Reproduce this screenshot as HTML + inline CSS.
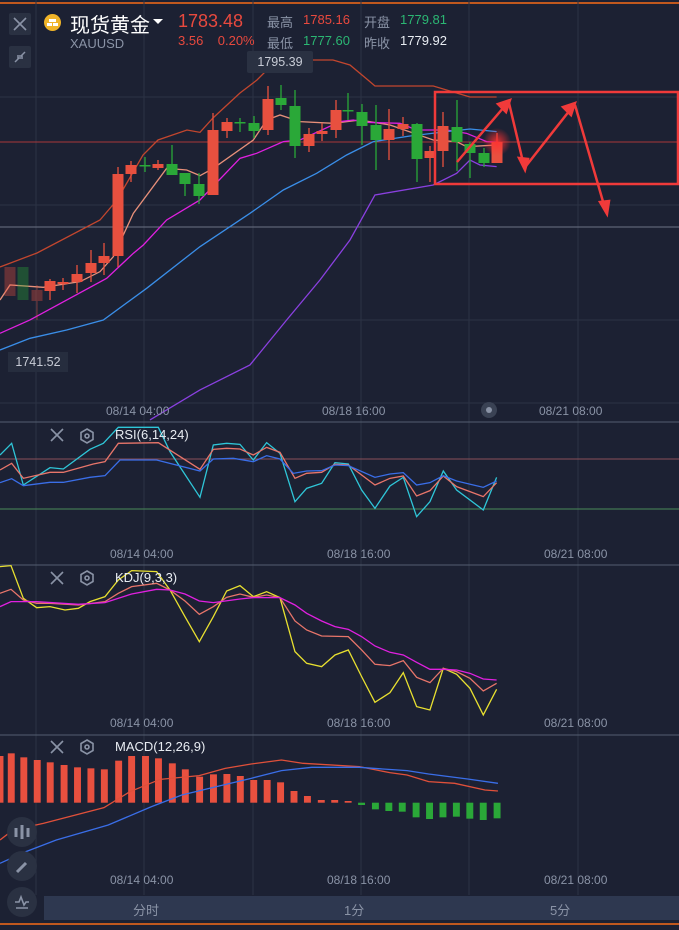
<!DOCTYPE html>
<html><head><meta charset="utf-8"><style>
body{margin:0;width:679px;height:930px;background:#1c2133;overflow:hidden;font-family:"Liberation Sans","Noto Sans CJK SC",sans-serif;position:relative}
.t{position:absolute;white-space:nowrap}
.g{color:#8a93a6}
.r{color:#e8493e}
.gr{color:#2bb673}
.w{color:#e8ecf2}
.ax{position:absolute;font-size:12px;color:#8a93a6}
svg{position:absolute;left:0;top:0}
.btn{position:absolute;width:22px;height:22px;background:#2a3142;border-radius:2px}
.cir{position:absolute;left:7px;width:30px;height:30px;border-radius:50%;background:#2a3142}
</style></head><body>
<svg width="679" height="930">
<defs><radialGradient id="gl"><stop offset="0" stop-color="#ff3030" stop-opacity=".9"/><stop offset="1" stop-color="#ff3030" stop-opacity="0"/></radialGradient></defs>
<line x1="0" y1="3" x2="679" y2="3" stroke="#c0581e" stroke-width="2"/>
<line x1="0" y1="924" x2="679" y2="924" stroke="#c0581e" stroke-width="2"/>
<g stroke="#2c3345" stroke-width="1">
<line x1="36" y1="0" x2="36" y2="895"/><line x1="144" y1="0" x2="144" y2="895"/><line x1="253" y1="0" x2="253" y2="895"/><line x1="361" y1="0" x2="361" y2="895"/><line x1="469" y1="0" x2="469" y2="895"/><line x1="578" y1="0" x2="578" y2="895"/>
<line x1="0" y1="97" x2="679" y2="97"/><line x1="0" y1="205" x2="679" y2="205"/><line x1="0" y1="320" x2="679" y2="320"/><line x1="0" y1="403" x2="679" y2="403"/>
</g>
<line x1="0" y1="227" x2="679" y2="227" stroke="#6b7385"/>
<line x1="0" y1="142" x2="679" y2="142" stroke="#a8383a"/>
<line x1="0" y1="422" x2="679" y2="422" stroke="#555d70"/>
<line x1="0" y1="565" x2="679" y2="565" stroke="#555d70"/>
<line x1="0" y1="735" x2="679" y2="735" stroke="#555d70"/>
<line x1="0" y1="459" x2="679" y2="459" stroke="#8a5058"/>
<line x1="0" y1="509" x2="679" y2="509" stroke="#4a8a58"/>

<g transform="translate(0,80) scale(0.3333)" fill="none" stroke-width="1.3">
<polyline vector-effect="non-scaling-stroke" stroke="#c2462e" points="0,561 111,519 300,420 351,360 429,225 474,180 561,150 600,157 639,114 720,39 771,0 831,-60 999,-60 1050,-45 1104,0 1125,18 1300,18 1410,51 1490,51"/>
<polyline vector-effect="non-scaling-stroke" stroke="#e8907a" points="0,660 30,615 130,622 240,605 300,575 340,530 400,400 500,265 560,270 600,287 640,265 760,180 800,120 840,105 900,125 1000,130 1080,120 1170,135 1300,180 1370,185 1400,200 1490,195"/>
<polyline vector-effect="non-scaling-stroke" stroke="#e020e0" points="0,760 90,720 320,595 400,520 430,495 500,420 600,360 720,235 770,220 850,185 900,180 1020,125 1060,120 1100,127 1200,130 1250,150 1340,150 1400,160 1460,185 1490,187"/>
<polyline vector-effect="non-scaling-stroke" stroke="#3a8ee8" points="0,810 90,775 200,750 310,720 440,625 600,500 750,400 850,330 950,280 1040,225 1120,185 1230,168 1340,155 1410,147 1490,155"/>
<polyline vector-effect="non-scaling-stroke" stroke="#8a40e0" points="450,1020 600,930 750,855 860,720 960,600 1050,480 1125,345 1300,315 1370,280 1410,240 1440,255 1490,260"/>
</g>

<g id="candles"></g>
<circle cx="497" cy="142" r="14" fill="url(#gl)"/>
<rect x="435" y="92" width="243" height="92" fill="none" stroke="#f03a3a" stroke-width="2.5"/>
<g stroke="#f03a3a" stroke-width="2.5" fill="#f03a3a">
<line x1="457" y1="162" x2="504" y2="107"/><polygon points="510,100 498,104 506,112"/>
<line x1="509" y1="103" x2="523" y2="162"/><polygon points="525,170 519,158 528,159"/>
<line x1="526" y1="166" x2="570" y2="110"/><polygon points="575,103 563,107 571,115"/>
<line x1="575" y1="105" x2="604" y2="205"/><polygon points="607,214 600,202 609,201"/>
</g>

<g transform="translate(0,420) scale(0.3333)" fill="none" stroke-width="1.3">
<polyline vector-effect="non-scaling-stroke" stroke="#2fc6d8" points="0,105 35,70 70,195 150,143 190,147 270,88 310,70 355,22 475,22 510,95 600,232 640,75 680,70 720,73 760,120 800,68 840,100 885,245 920,205 965,190 1005,128 1045,132 1085,210 1125,265 1170,198 1210,172 1250,290 1290,245 1330,153 1370,210 1450,270 1490,172"/>
<polyline vector-effect="non-scaling-stroke" stroke="#e8756a" points="0,150 35,130 70,175 150,157 190,157 280,132 315,125 355,70 475,68 600,148 640,88 680,85 720,87 760,105 800,82 840,97 885,175 920,160 965,157 1005,133 1045,135 1125,195 1170,175 1210,168 1250,228 1290,212 1330,168 1370,200 1450,230 1490,188"/>
<polyline vector-effect="non-scaling-stroke" stroke="#3a6ee8" points="0,188 35,176 70,197 150,187 190,187 270,172 315,167 360,120 470,120 600,153 640,117 700,115 760,125 800,107 840,117 880,160 920,153 965,152 1005,135 1045,137 1125,172 1170,162 1210,158 1250,195 1290,188 1330,167 1370,183 1450,202 1490,183"/>
<polyline vector-effect="non-scaling-stroke" stroke="#e8e030" points="0,440 33,437 70,535 110,563 150,560 195,570 235,565 270,545 315,530 355,480 395,452 470,455 510,510 555,590 598,665 640,590 680,513 720,497 760,530 800,515 840,533 885,695 920,730 965,740 1005,705 1045,690 1085,770 1125,847 1170,818 1210,758 1250,860 1290,870 1330,745 1370,763 1410,805 1450,885 1490,808"/>
<polyline vector-effect="non-scaling-stroke" stroke="#e8756a" points="0,520 33,508 70,540 110,550 150,550 235,555 315,545 355,520 395,500 470,490 510,510 555,543 598,583 640,560 680,532 720,522 760,532 800,525 840,533 885,603 920,630 965,648 1045,650 1085,690 1125,733 1170,737 1210,722 1250,772 1290,788 1330,745 1370,755 1410,775 1450,813 1490,790"/>
<polyline vector-effect="non-scaling-stroke" stroke="#e020e0" points="0,560 33,545 110,545 235,553 315,548 395,522 470,508 510,510 555,522 598,543 640,548 720,537 760,533 840,533 885,555 920,580 965,603 1005,620 1045,628 1085,650 1125,678 1170,697 1210,705 1250,727 1290,748 1330,748 1370,750 1410,760 1450,777 1490,780"/>
</g>

<g id="macd"></g>
<g transform="translate(0,730) scale(0.433,0.3333)" fill="none" stroke-width="1.3">
<polyline vector-effect="non-scaling-stroke" stroke="#e0503a" points="0,330 30,300 100,280 240,233 300,185 370,148 460,137 520,115 580,102 650,90 700,100 830,110 900,128 940,135 990,155 1050,160 1120,180 1150,183"/>
<polyline vector-effect="non-scaling-stroke" stroke="#3a6ee8" points="0,400 60,365 130,330 250,285 350,230 420,195 500,170 580,145 650,122 720,112 830,112 940,122 990,132 1080,147 1150,160"/>
</g>

<g stroke="#8a93a6" stroke-width="1.6" fill="none">
<path d="M51 429l12 12M63 429l-12 12"/><path d="M51 572l12 12M63 572l-12 12"/><path d="M51 741l12 12M63 741l-12 12"/>
<polygon points="87,429 93,432.5 93,439.5 87,443 81,439.5 81,432.5"/><circle cx="87" cy="436" r="2"/>
<polygon points="87,571 93,574.5 93,581.5 87,585 81,581.5 81,574.5"/><circle cx="87" cy="578" r="2"/>
<polygon points="87,740 93,743.5 93,750.5 87,754 81,750.5 81,743.5"/><circle cx="87" cy="747" r="2"/>
</g>
<rect x="44" y="896" width="635" height="24" fill="#2e3850"/>
</svg>
<script>
var C=[[10,267,296,0,1,267,296],[23,267,300,1,1,267,300],[37,290,301,0,1,285,320],[50,281,291,0,0,279,300],[63,282,284,0,0,278,290],[77,274,282,0,0,265,293],[91,263,273,0,0,250,282],[104,256,263,0,0,243,275],[118,174,256,0,0,167,267],[131,165,174,0,0,161,182],[145,165,166,1,0,157,172],[158,164,168,0,0,160,170],[172,164,175,1,0,145,175],[185,173,184,1,0,173,196],[199,184,196,1,0,173,204],[213,130,195,0,0,113,195],[227,122,131,0,0,118,138],[240,122,123,1,0,118,132],[254,123,131,1,0,116,138],[268,99,130,0,0,86,135],[281,98,105,1,0,85,110],[295,106,146,1,0,90,158],[309,134,146,0,0,128,152],[322,131,134,0,0,123,141],[336,110,130,0,0,100,138],[348,110,111,1,0,93,120],[362,112,126,1,0,104,145],[376,125,140,1,0,105,170],[389,129,140,0,0,109,160],[403,124,129,0,0,117,136],[417,124,159,1,0,123,182],[430,151,158,0,0,146,182],[443,126,151,0,0,112,167],[457,127,142,1,0,100,171],[470,144,153,1,0,142,178],[484,153,163,1,0,148,167],[497,142,163,0,0,133,163]];
var s='';C.forEach(function(c){var col=c[3]?'#2aa838':'#e8503f';var op=c[4]?0.35:1;s+='<g opacity="'+op+'"><line x1="'+c[0]+'" y1="'+c[5]+'" x2="'+c[0]+'" y2="'+c[6]+'" stroke="'+col+'" stroke-width="1.3"/><rect x="'+(c[0]-5.5)+'" y="'+c[1]+'" width="11" height="'+Math.max(1.5,c[2]-c[1])+'" fill="'+col+'"/></g>';});
document.getElementById('candles').innerHTML=s;
var B=[[0,78],[18,70],[47,82],[78,90],[108,97],[140,105],[171,112],[202,115],[233,118],[266,92],[296,78],[328,78],[358,85],[390,100],[420,118],[453,140],[485,133],[516,132],[547,138],[578,150],[609,150],[640,157],[671,183],[702,198],[734,210],[765,210],[796,213],[827,-225],[859,-238],[890,-243],[921,-245],[953,-262],[984,-267],[1015,-262],[1046,-260],[1077,-266],[1108,-270],[1140,-265]];
var m='';B.forEach(function(b){var x=b[0]*0.433,w=(b[0]==0?8:16)*0.433;var y;if(b[1]>0){y=730+b[1]/3;m+='<rect x="'+x+'" y="'+y+'" width="'+w+'" height="'+(802.7-y)+'" fill="#e8503f"/>';}else{y=730-b[1]/3;m+='<rect x="'+x+'" y="802.7" width="'+w+'" height="'+(y-802.7)+'" fill="#2aa838"/>';}});
document.getElementById('macd').innerHTML=m;
</script>
<div class="btn" style="left:9px;top:13px"><svg width="22" height="22"><path d="M5 5l12 12M17 5L5 17" stroke="#8a93a6" stroke-width="1.6"/></svg></div>
<div class="btn" style="left:9px;top:46px"><svg width="22" height="22"><path d="M6 16l4-4M16 6l-4 4M9 9v3h3M13 13v-3h-3" stroke="#8a93a6" stroke-width="1.5" fill="none"/></svg></div>
<div style="position:absolute;left:44px;top:14px;width:17px;height:17px;border-radius:50%;background:#f0b429"></div>
<div style="position:absolute;left:49px;top:19px;width:7px;height:3px;background:#fff"></div>
<div style="position:absolute;left:47px;top:23px;width:5px;height:3px;background:#fff"></div>
<div style="position:absolute;left:53px;top:23px;width:5px;height:3px;background:#fff"></div>
<div class="t w" style="left:70px;top:9px;font-size:20px;color:#fff">现货黄金</div>
<div class="t" style="left:153px;top:19px;width:0;height:0;border-left:5px solid transparent;border-right:5px solid transparent;border-top:5px solid #fff"></div>
<div class="t g" style="left:70px;top:36px;font-size:13px">XAUUSD</div>
<div class="t r" style="left:178px;top:11px;font-size:18px">1783.48</div>
<div class="t r" style="left:178px;top:33px;font-size:13px">3.56&nbsp;&nbsp;&nbsp;&nbsp;0.20%</div>
<div class="t g" style="left:267px;top:12px;font-size:13px">最高</div>
<div class="t r" style="left:303px;top:12px;font-size:13px">1785.16</div>
<div class="t g" style="left:267px;top:33px;font-size:13px">最低</div>
<div class="t gr" style="left:303px;top:33px;font-size:13px">1777.60</div>
<div class="t g" style="left:364px;top:12px;font-size:13px">开盘</div>
<div class="t gr" style="left:400px;top:12px;font-size:13px">1779.81</div>
<div class="t g" style="left:364px;top:33px;font-size:13px">昨收</div>
<div class="t w" style="left:400px;top:33px;font-size:13px">1779.92</div>
<div class="t" style="left:247px;top:51px;width:66px;height:22px;background:#2a3142;border-radius:2px;color:#c8ccd6;font-size:12.5px;line-height:22px;text-align:center">1795.39</div>
<div class="t" style="left:8px;top:352px;width:60px;height:20px;background:#262d3e;color:#c8ccd6;font-size:12.5px;line-height:20px;text-align:center">1741.52</div>
<div class="ax" style="left:106px;top:404px">08/14 04:00</div>
<div class="ax" style="left:322px;top:404px">08/18 16:00</div>
<div class="ax" style="left:539px;top:404px">08/21 08:00</div>
<div style="position:absolute;left:481px;top:402px;width:16px;height:16px;border-radius:50%;background:#3a4254"></div>
<div style="position:absolute;left:486px;top:407px;width:6px;height:6px;border-radius:50%;background:#8a93a6"></div>
<div class="t w" style="left:115px;top:427px;font-size:13px">RSI(6,14,24)</div>
<div class="t w" style="left:115px;top:570px;font-size:13px">KDJ(9,3,3)</div>
<div class="t w" style="left:115px;top:739px;font-size:13px">MACD(12,26,9)</div>
<div class="ax" style="left:110px;top:547px">08/14 04:00</div>
<div class="ax" style="left:327px;top:547px">08/18 16:00</div>
<div class="ax" style="left:544px;top:547px">08/21 08:00</div>
<div class="ax" style="left:110px;top:716px">08/14 04:00</div>
<div class="ax" style="left:327px;top:716px">08/18 16:00</div>
<div class="ax" style="left:544px;top:716px">08/21 08:00</div>
<div class="ax" style="left:110px;top:873px">08/14 04:00</div>
<div class="ax" style="left:327px;top:873px">08/18 16:00</div>
<div class="ax" style="left:544px;top:873px">08/21 08:00</div>
<div class="ax" style="left:133px;top:900px;font-size:13px">分时</div>
<div class="ax" style="left:344px;top:900px;font-size:13px">1分</div>
<div class="ax" style="left:550px;top:900px;font-size:13px">5分</div>
<div class="cir" style="top:817px"><svg width="30" height="30"><path d="M9 11v9M15 8v14M21 11v9" stroke="#8a93a6" stroke-width="3"/></svg></div>
<div class="cir" style="top:851px"><svg width="30" height="30"><path d="M10 21l9-9" stroke="#8a93a6" stroke-width="3"/></svg></div>
<div class="cir" style="top:887px"><svg width="30" height="30"><path d="M8 15h4l2-5 3 8 2-3h3M9 21h12" stroke="#8a93a6" stroke-width="1.6" fill="none"/></svg></div>
</body></html>
